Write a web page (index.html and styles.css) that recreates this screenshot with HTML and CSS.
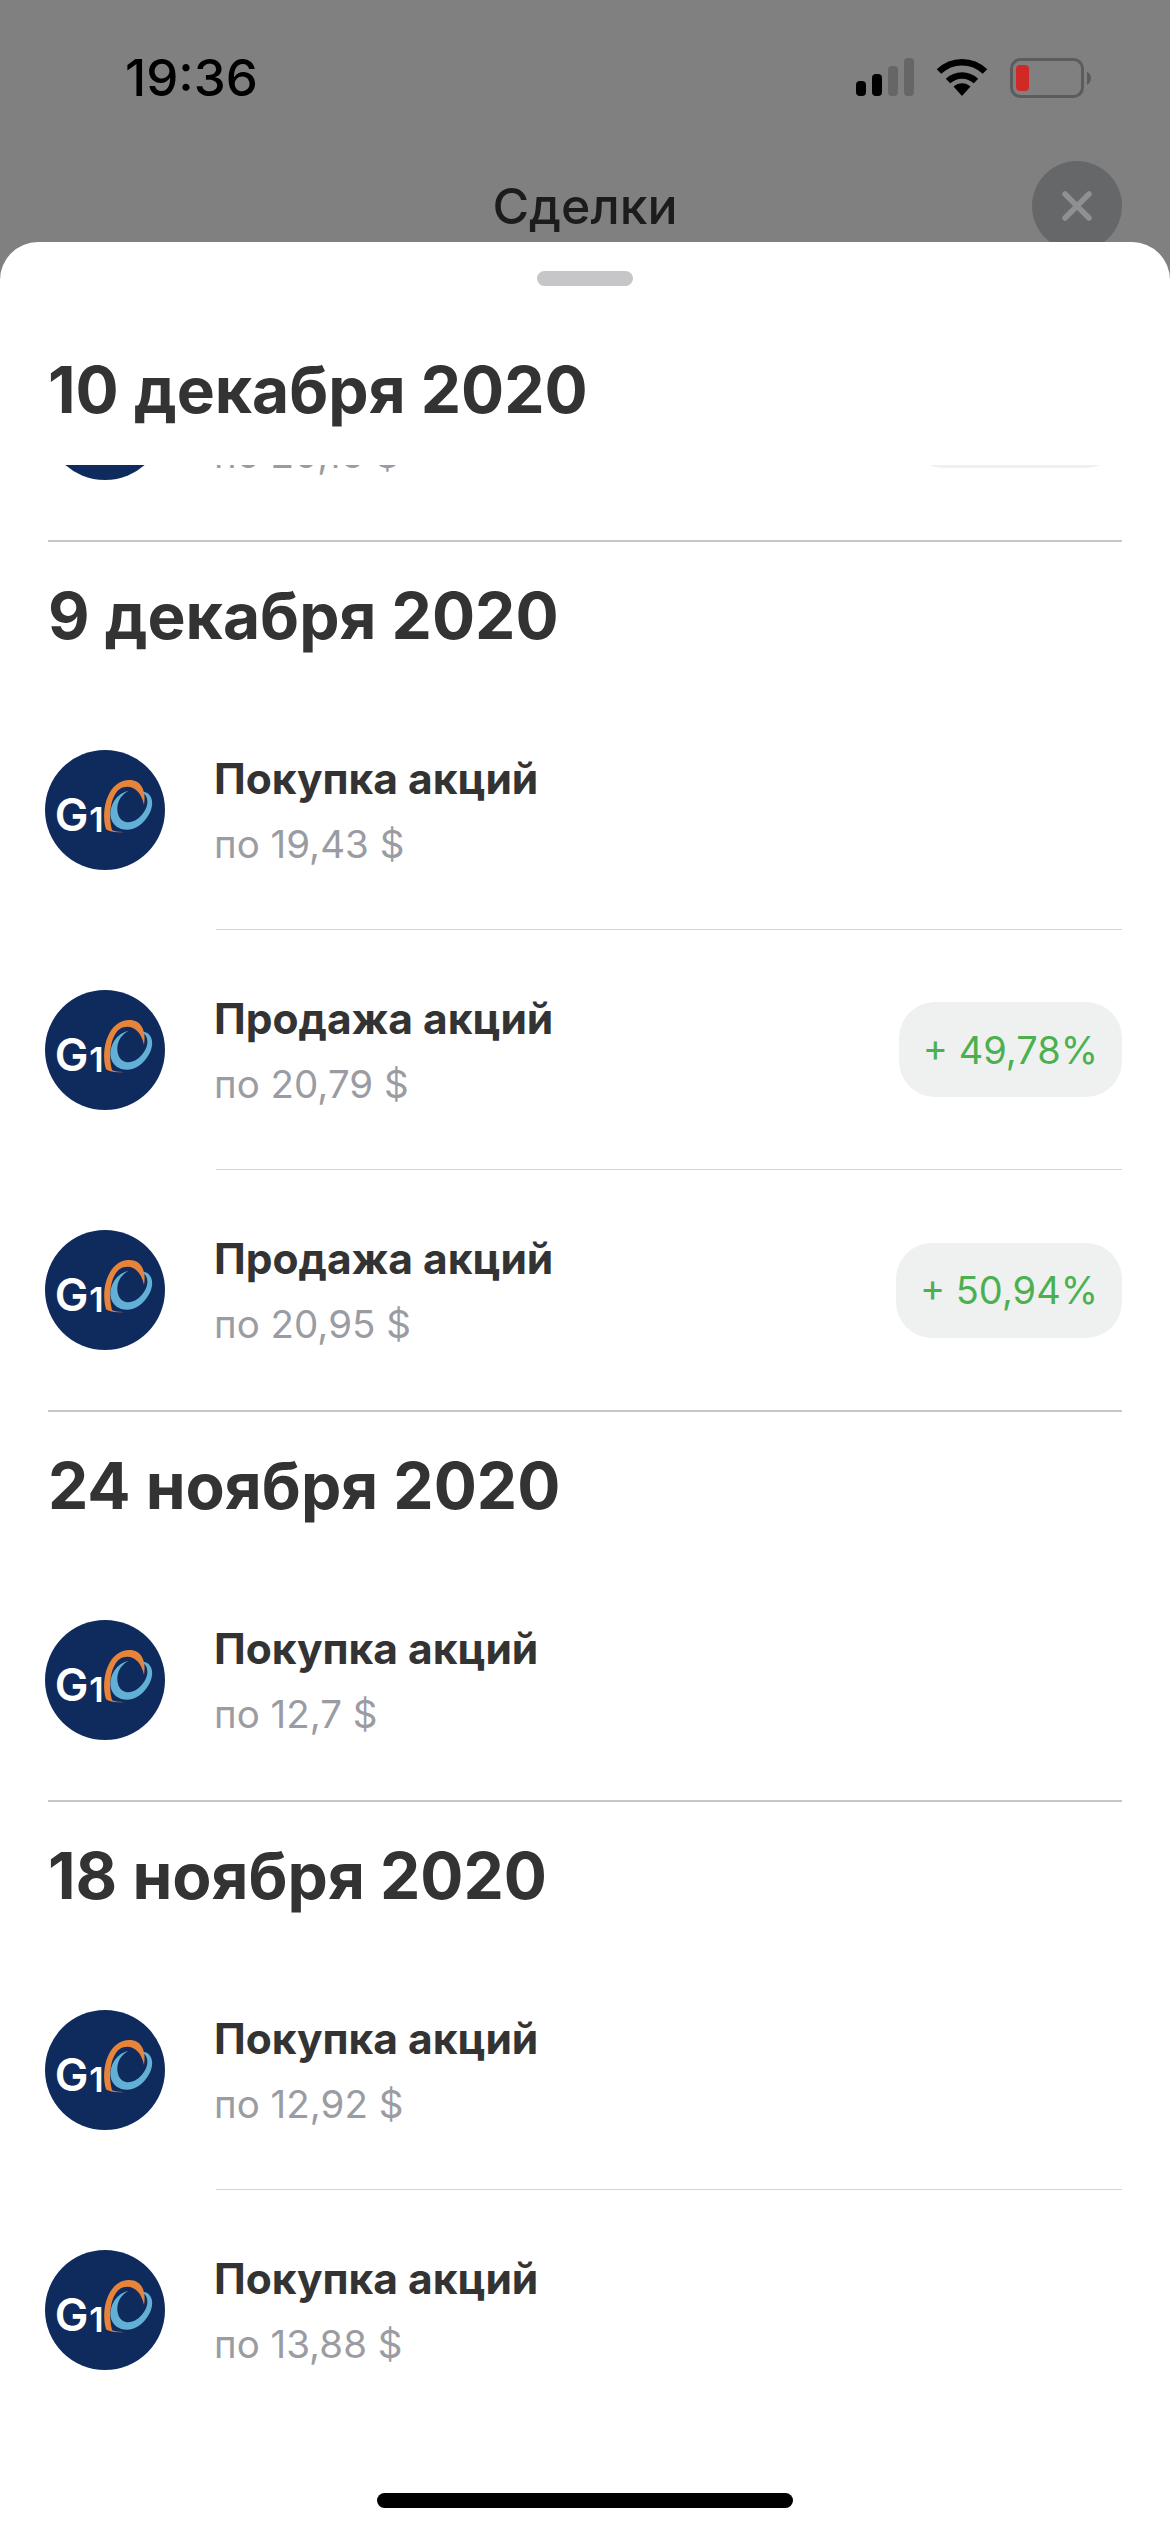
FILE: index.html
```html
<!DOCTYPE html>
<html lang="ru">
<head>
  <meta charset="UTF-8">
  <title>Сделки</title>
  <link rel="stylesheet" href="styles.css">
</head>
<body>
  <svg class="defs" width="0" height="0">
    <symbol id="g1-logo" viewBox="75 60 360 360">
      <circle cx="255" cy="240" r="180" fill="#0f2b5e"/>
      <path fill="#e8833a" d="M258 298C240 232 268 152 325 150C362 148 380 180 372 225C364 184 338 164 310 172C276 182 262 245 276 300C280 304 300 306 312 306C290 308 268 306 258 298Z"/>
      <path fill="#63b0d6" d="M325 183C290 190 268 225 272 260C278 296 320 310 352 290C386 270 406 226 392 200C386 188 376 185 364 185C386 196 390 226 365 255C340 284 306 284 295 255C285 225 300 196 325 183Z"/>
      <text class="logo-g" x="104" y="304">G</text>
      <text class="logo-one" x="208" y="306">1</text>
    </symbol>
  </svg>

  <div class="screen">
    <!-- Dimmed page behind the sheet -->
    <div class="backdrop">
      <div class="status-bar">
        <span class="time">19:36</span>
        <div class="status-icons">
          <svg class="signal" width="58" height="38" viewBox="0 0 58 38">
            <rect x="0" y="23" width="10" height="15" rx="4" fill="#000"/>
            <rect x="16" y="16" width="10" height="22" rx="4" fill="#000"/>
            <rect x="32" y="8" width="10" height="30" rx="4" fill="#666"/>
            <rect x="48" y="0" width="10" height="38" rx="4" fill="#666"/>
          </svg>
          <svg class="wifi" width="52" height="38" viewBox="0 0 52 38">
            <path d="M3 13.5C16 1 36 1 49 13.5" fill="none" stroke="#000" stroke-width="6.5"/>
            <path d="M12 23C20 15.500 32 15.500 40 23" fill="none" stroke="#000" stroke-width="6.500"/>
            <path d="M17.500 28.500C22.500 24 29.500 24 34.500 28.500L26 38Z" fill="#000"/>
          </svg>
          <svg class="battery" width="82" height="40" viewBox="0 0 82 40">
            <rect x="1.500" y="1.500" width="71" height="37" rx="9" fill="none" stroke="#5c5c5c" stroke-width="3"/>
            <rect x="6" y="7" width="13" height="26" rx="4" fill="#d12a26"/>
            <path d="M77 14C80 15 81 17.500 81 20C81 22.500 80 25 77 27Z" fill="#5c5c5c"/>
          </svg>
        </div>
      </div>
      <div class="nav">
        <span class="nav-title">Сделки</span>
        <div class="close-btn">
          <svg width="32" height="32" viewBox="0 0 32 32">
            <path d="M4 4L28 28M28 4L4 28" stroke="#8f9091" stroke-width="5.500" stroke-linecap="round"/>
          </svg>
        </div>
      </div>
    </div>

    <!-- Sheet -->
    <div class="sheet">
      <div class="handle"></div>
      <h2 class="sticky-date">10 декабря 2020</h2>

      <!-- row scrolled under the date -->
      <div class="scrolled">
        <div class="row">
          <svg class="logo"><use href="#g1-logo"/></svg>
          <div class="row-body">
            <div class="row-text">
              <div class="row-title">Продажа акций</div>
              <div class="row-price">по 20,15 $</div>
            </div>
            <div class="pill">+ 45,10%</div>
          </div>
        </div>
      </div>

      <section class="day">
        <h2 class="date">9 декабря 2020</h2>
        <div class="row">
          <svg class="logo"><use href="#g1-logo"/></svg>
          <div class="row-body">
            <div class="row-text">
              <div class="row-title">Покупка акций</div>
              <div class="row-price">по 19,43 $</div>
            </div>
          </div>
        </div>
        <div class="row">
          <svg class="logo"><use href="#g1-logo"/></svg>
          <div class="row-body">
            <div class="row-text">
              <div class="row-title">Продажа акций</div>
              <div class="row-price">по 20,79 $</div>
            </div>
            <div class="pill">+ 49,78%</div>
          </div>
        </div>
        <div class="row">
          <svg class="logo"><use href="#g1-logo"/></svg>
          <div class="row-body">
            <div class="row-text">
              <div class="row-title">Продажа акций</div>
              <div class="row-price">по 20,95 $</div>
            </div>
            <div class="pill">+ 50,94%</div>
          </div>
        </div>
      </section>

      <section class="day">
        <h2 class="date">24 ноября 2020</h2>
        <div class="row">
          <svg class="logo"><use href="#g1-logo"/></svg>
          <div class="row-body">
            <div class="row-text">
              <div class="row-title">Покупка акций</div>
              <div class="row-price">по 12,7 $</div>
            </div>
          </div>
        </div>
      </section>

      <section class="day">
        <h2 class="date">18 ноября 2020</h2>
        <div class="row">
          <svg class="logo"><use href="#g1-logo"/></svg>
          <div class="row-body">
            <div class="row-text">
              <div class="row-title">Покупка акций</div>
              <div class="row-price">по 12,92 $</div>
            </div>
          </div>
        </div>
        <div class="row">
          <svg class="logo"><use href="#g1-logo"/></svg>
          <div class="row-body">
            <div class="row-text">
              <div class="row-title">Покупка акций</div>
              <div class="row-price">по 13,88 $</div>
            </div>
          </div>
        </div>
      </section>

      <div class="home-indicator"></div>
    </div>
  </div>
</body>
</html>
```

FILE: styles.css
```css
html, body {
  margin: 0;
  padding: 0;
}

body {
  font-family: Inter, "Liberation Sans", sans-serif;
  background: #fff;
}

.defs {
  display: block;
  height: 0;
}

.logo-g,
.logo-one {
  font-family: Inter, sans-serif;
  font-weight: 600;
  fill: #fff;
}

.logo-g {
  font-size: 135px;
}

.logo-one {
  font-size: 102px;
}

.screen {
  width: 1170px;
  height: 2532px;
  display: flex;
  flex-direction: column;
  background: #808080;
  overflow: hidden;
}

/* backdrop */
.backdrop {
  height: 242px;
  flex-shrink: 0;
}

.status-bar {
  height: 156px;
  box-sizing: border-box;
  padding: 52px 78px 0 125px;
  display: flex;
  justify-content: space-between;
  align-items: flex-start;
}

.time {
  font-size: 51px;
  line-height: 52px;
  font-weight: 500;
  color: #000;
}

.status-icons {
  display: flex;
  align-items: flex-start;
  gap: 22px;
  padding-top: 6px;
}

.nav {
  position: relative;
  display: flex;
  justify-content: center;
}

.nav-title {
  font-size: 50px;
  line-height: 56px;
  font-weight: 500;
  color: #1c1c1c;
  margin-top: 22px;
}

.close-btn {
  position: absolute;
  top: 5px;
  right: 48px;
  width: 90px;
  height: 90px;
  border-radius: 50%;
  background: #666768;
  display: flex;
  align-items: center;
  justify-content: center;
}

/* sheet */
.sheet {
  position: relative;
  flex: 1;
  background: #fff;
  border-radius: 38px 38px 0 0;
  padding: 29px 48px 0 48px;
  display: flex;
  flex-direction: column;
}

.handle {
  width: 96px;
  height: 15px;
  border-radius: 8px;
  background: #c6c6c8;
  align-self: center;
}

.sticky-date,
.date {
  margin: 0;
  font-size: 64px;
  line-height: 80px;
  font-weight: 700;
  color: #333;
}

.sticky-date {
  margin-top: 64px;
}

/* the row is cut by the top edge of this box */
.scrolled {
  height: 75px;
  margin-top: 35px;
  overflow: hidden;
  display: flex;
  flex-direction: column;
  justify-content: flex-end;
  flex-shrink: 0;
}

.scrolled .row {
  flex-shrink: 0;
}

.scrolled .row-body {
  border-bottom: none;
}

.day {
  border-top: 2px solid #c8c8ca;
}

.date {
  padding: 34px 0 34px 0;
}

.row {
  display: flex;
  height: 240px;
  align-items: stretch;
  margin-left: -3px;
}

.logo {
  width: 120px;
  height: 120px;
  flex-shrink: 0;
  align-self: center;
}

.row-body {
  flex: 1;
  margin-left: 51px;
  display: flex;
  justify-content: space-between;
  align-items: center;
  border-bottom: 1px solid #d4d4d6;
}

.row:last-child .row-body {
  border-bottom: none;
}

.row-text {
  margin-left: -2px;
  padding-top: 3px;
}

.row-title {
  font-size: 42.500px;
  line-height: 48px;
  font-weight: 700;
  color: #333;
}

.row-price {
  font-size: 38.500px;
  line-height: 48px;
  color: #9b9ca3;
  margin-top: 17px;
}

.pill {
  height: 95px;
  padding: 0 24px;
  display: flex;
  align-items: center;
  border-radius: 36px;
  background: #eff1f1;
  font-size: 38px;
  color: #4cb050;
}

.home-indicator {
  position: absolute;
  left: 377px;
  bottom: 24px;
  width: 416px;
  height: 15px;
  border-radius: 8px;
  background: #000;
}
```
